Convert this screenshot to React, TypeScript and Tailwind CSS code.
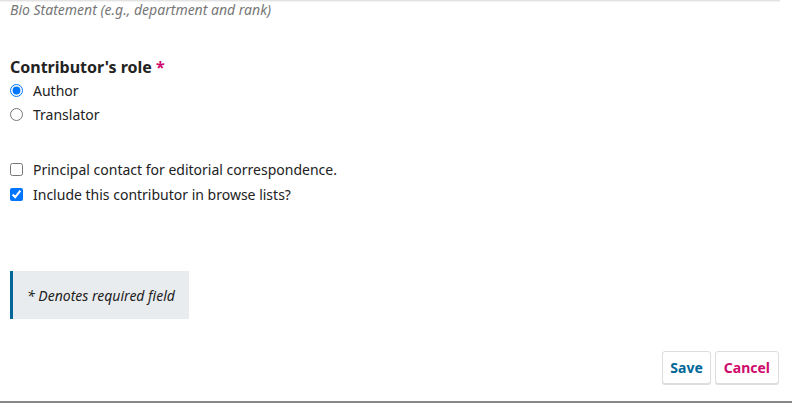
import React from 'react';

const font = { fontFamily: '"Noto Sans", sans-serif' };

function Choice({ type, label, checked, name }: { type: 'radio' | 'checkbox'; label: string; checked?: boolean; name?: string }) {
  return (
    <label className="flex items-center h-6 text-[14px] text-[#222]">
      <input type={type} name={name} defaultChecked={checked} className="m-0 w-[13px] h-[13px]" />
      <span className="ml-[10px]">{label}</span>
    </label>
  );
}

export default function App() {
  return (
    <div className="relative w-[794px] h-[403px] bg-white overflow-hidden" style={font}>
      {/* bottom edge of the bio textarea above */}
      <div className="w-[780px] h-px bg-[#e2e2e2] shadow-[0_1px_1px_rgba(0,0,0,0.06)]" />

      <div className="px-[10px]">
        <p className="mt-0 text-[14px] italic text-[#777] leading-[18px]">Bio Statement (e.g., department and rank)</p>

        <div className="mt-[37px]">
          <h3 className="text-[16px] font-bold text-[#222] leading-[22px]">
            Contributor's role <span className="text-[#d00a6c]">*</span>
          </h3>
          <div>
            <Choice type="radio" name="role" label="Author" checked />
            <Choice type="radio" name="role" label="Translator" />
          </div>
        </div>

        <div className="mt-[31px]">
          <Choice type="checkbox" label="Principal contact for editorial correspondence." />
          <div className="mt-px">
            <Choice type="checkbox" label="Include this contributor in browse lists?" checked />
          </div>
        </div>

        <div className="mt-[65px] w-[179px] h-[48px] flex items-center bg-[#e9ecee] border-l-[3px] border-[#006798] pl-[14px]">
          <span className="text-[14px] italic text-[#222]">* Denotes required field</span>
        </div>

        <div className="mt-[32px] flex justify-end gap-[4px] pr-[5px]">
          <button className="h-[33px] px-[7px] text-[14px] font-bold text-[#006798] bg-white border border-[#ddd] rounded-[3px] shadow-[0_1px_0_#ddd]">Save</button>
          <button className="h-[33px] px-[8px] text-[14px] font-bold text-[#d00a6c] bg-white border border-[#ddd] rounded-[3px] shadow-[0_1px_0_#ddd]">Cancel</button>
        </div>
      </div>

      <div className="absolute left-0 bottom-0 w-[792px] h-[2px] bg-[#888]" />
    </div>
  );
}
